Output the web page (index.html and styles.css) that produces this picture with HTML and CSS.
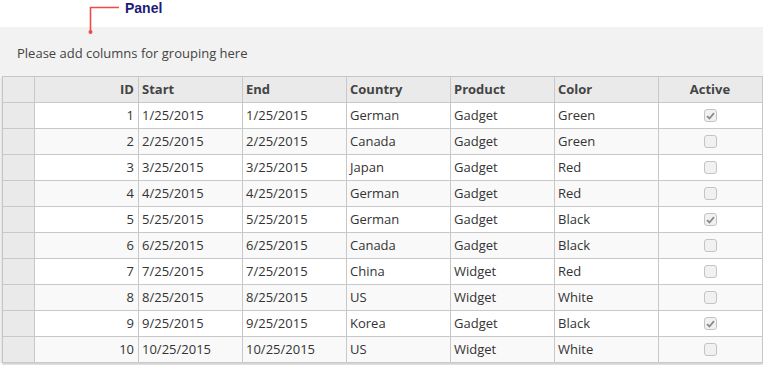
FILE: index.html
```html
<!DOCTYPE html>
<html>
<head>
<meta charset="utf-8">
<link rel="stylesheet" href="styles.css">
</head>
<body>
<div class="annot">
  <svg class="annot-line" width="40" height="34" viewBox="0 0 40 34">
    <path d="M32 7.5 H3.5 V32" fill="none" stroke="#ee4b4b" stroke-width="1.6"/>
    <circle cx="3.5" cy="32" r="2" fill="#ee4b4b"/>
  </svg>
  <span class="annot-label">Panel</span>
</div>
<div class="panel">
  <div class="group-text">Please add columns for grouping here</div>
  <div class="grid">
    <div class="row head">
      <div class="c rh"></div>
      <div class="c r">ID</div>
      <div class="c">Start</div>
      <div class="c">End</div>
      <div class="c">Country</div>
      <div class="c">Product</div>
      <div class="c">Color</div>
      <div class="c ctr">Active</div>
    </div>
    <div class="row"><div class="c rh"></div><div class="c r">1</div><div class="c">1/25/2015</div><div class="c">1/25/2015</div><div class="c">German</div><div class="c">Gadget</div><div class="c">Green</div><div class="c ctr"><span class="cb on"><svg width="9" height="8" viewBox="0 0 9 8"><path d="M1 4.2 L3.4 6.5 L8 1.2" fill="none" stroke="#8a8a8a" stroke-width="1.8"/></svg></span></div></div>
    <div class="row alt"><div class="c rh"></div><div class="c r">2</div><div class="c">2/25/2015</div><div class="c">2/25/2015</div><div class="c">Canada</div><div class="c">Gadget</div><div class="c">Green</div><div class="c ctr"><span class="cb"></span></div></div>
    <div class="row"><div class="c rh"></div><div class="c r">3</div><div class="c">3/25/2015</div><div class="c">3/25/2015</div><div class="c">Japan</div><div class="c">Gadget</div><div class="c">Red</div><div class="c ctr"><span class="cb"></span></div></div>
    <div class="row alt"><div class="c rh"></div><div class="c r">4</div><div class="c">4/25/2015</div><div class="c">4/25/2015</div><div class="c">German</div><div class="c">Gadget</div><div class="c">Red</div><div class="c ctr"><span class="cb"></span></div></div>
    <div class="row"><div class="c rh"></div><div class="c r">5</div><div class="c">5/25/2015</div><div class="c">5/25/2015</div><div class="c">German</div><div class="c">Gadget</div><div class="c">Black</div><div class="c ctr"><span class="cb on"><svg width="9" height="8" viewBox="0 0 9 8"><path d="M1 4.2 L3.4 6.5 L8 1.2" fill="none" stroke="#8a8a8a" stroke-width="1.8"/></svg></span></div></div>
    <div class="row alt"><div class="c rh"></div><div class="c r">6</div><div class="c">6/25/2015</div><div class="c">6/25/2015</div><div class="c">Canada</div><div class="c">Gadget</div><div class="c">Black</div><div class="c ctr"><span class="cb"></span></div></div>
    <div class="row"><div class="c rh"></div><div class="c r">7</div><div class="c">7/25/2015</div><div class="c">7/25/2015</div><div class="c">China</div><div class="c">Widget</div><div class="c">Red</div><div class="c ctr"><span class="cb"></span></div></div>
    <div class="row alt"><div class="c rh"></div><div class="c r">8</div><div class="c">8/25/2015</div><div class="c">8/25/2015</div><div class="c">US</div><div class="c">Widget</div><div class="c">White</div><div class="c ctr"><span class="cb"></span></div></div>
    <div class="row"><div class="c rh"></div><div class="c r">9</div><div class="c">9/25/2015</div><div class="c">9/25/2015</div><div class="c">Korea</div><div class="c">Gadget</div><div class="c">Black</div><div class="c ctr"><span class="cb on"><svg width="9" height="8" viewBox="0 0 9 8"><path d="M1 4.2 L3.4 6.5 L8 1.2" fill="none" stroke="#8a8a8a" stroke-width="1.8"/></svg></span></div></div>
    <div class="row alt"><div class="c rh"></div><div class="c r">10</div><div class="c">10/25/2015</div><div class="c">10/25/2015</div><div class="c">US</div><div class="c">Widget</div><div class="c">White</div><div class="c ctr"><span class="cb"></span></div></div>
  </div>
</div>
</body>
</html>
```
FILE: styles.css
```css
* { box-sizing: border-box; }
html, body { margin: 0; padding: 0; background: #fff; }
body {
  width: 763px;
  height: 365px;
  overflow: hidden;
  font-family: "Open Sans", "Segoe UI", sans-serif;
  font-size: 13px;
  color: #333;
}
.annot {
  position: relative;
  height: 27px;
}
.annot-line {
  position: absolute;
  left: 87px;
  top: 0;
}
.annot-label {
  position: absolute;
  left: 125px;
  top: 0;
  font-family: "Liberation Sans", Arial, sans-serif;
  font-weight: bold;
  font-size: 14px;
  line-height: 16px;
  color: #1c1c78;
}
.panel {
  background: #f2f2f2;
  padding: 0 0 0 2px;
}
.group-text {
  height: 49px;
  padding: 16px 0 0 15px;
  line-height: 20px;
  color: #444;
}
.grid {
  border-top: 1px solid #c6c6c6;
  border-left: 1px solid #c6c6c6;
  background: #fff;
  box-shadow: 0 2px 2px rgba(0,0,0,0.18);
  width: 761px;
}
.row {
  display: grid;
  grid-template-columns: 32px repeat(7, 104px);
  height: 26px;
}
.row.alt { background: #f9f9f9; }
.c {
  border-right: 1px solid #c8c8c8;
  border-bottom: 1px solid #c8c8c8;
  padding: 0 4px 0 3px;
  line-height: 25px;
  white-space: nowrap;
  overflow: hidden;
}
.c.r { text-align: right; }
.c.ctr { text-align: center; display: flex; align-items: center; justify-content: center; }
.c.rh { background: #eaeaea; }
.head { background: #eaeaea; }
.head .c { font-weight: bold; color: #444; }
.cb {
  display: inline-flex;
  align-items: center;
  justify-content: center;
  width: 13px;
  height: 13px;
  border: 1px solid #c4c4c4;
  border-radius: 3px;
  background: #f1f1f1;
}
```
